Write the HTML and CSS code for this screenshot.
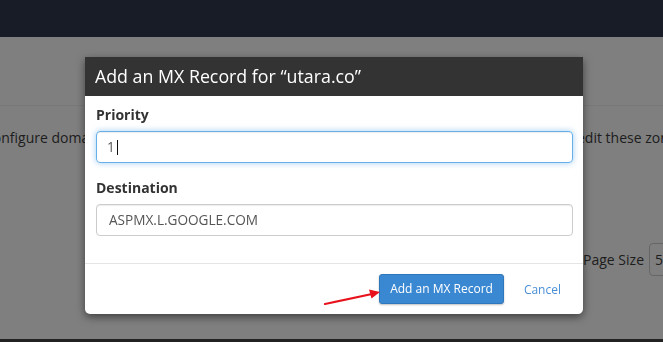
FILE: index.html
```html
<!DOCTYPE html>
<html lang="en">
<head>
  <meta charset="UTF-8" />
  <title>Zone Editor - Add MX Record</title>
  <link rel="stylesheet" href="styles.css">
</head>
<body>

  <div class="topbar"></div>

  <div class="page">
    <div class="page-head"></div>

    <div class="intro">
      <span class="intro-left">Configure domains and their DNS records here. You can</span>
      <span class="intro-right">edit these zones at any time.</span>
    </div>

    <div class="pager">
      <span>Page Size</span>
      <span class="page-select">5</span>
    </div>

    <div class="table-top"></div>
  </div>

  <div class="backdrop"></div>

  <div class="modal">
    <div class="modal-header">Add an MX Record for “utara.co”</div>

    <div class="modal-body">
      <div class="form-group">
        <label>Priority</label>
        <div class="field focus">1<span class="caret"></span></div>
      </div>
      <div class="form-group">
        <label>Destination</label>
        <div class="field">ASPMX.L.GOOGLE.COM</div>
      </div>
    </div>

    <div class="modal-footer">
      <button type="button" class="btn-primary">Add an MX Record</button>
      <a href="#" class="btn-link">Cancel</a>
    </div>
  </div>

  <!-- annotation arrow -->
  <svg class="arrow" width="70" height="24" viewBox="0 0 70 24">
    <line x1="5" y1="19" x2="52" y2="9" stroke="#e8121c" stroke-width="2.2" stroke-linecap="round"/>
    <polygon points="60,7 49,4.5 51.5,13.5" fill="#e8121c"/>
  </svg>

</body>
</html>
```

FILE: styles.css
```css
* {
  box-sizing: border-box;
}

body {
  margin: 0;
  font-family: 'Open Sans', sans-serif;
  font-size: 14px;
  color: #3c3c3c;
  background: #fff;
  height: 342px;
  overflow: hidden;
}

.topbar {
  height: 37px;
  background: #2e384c;
}

.page-head {
  height: 69px;
  border-bottom: 1px solid #f0f0f0;
}

.intro {
  display: flex;
  white-space: nowrap;
  margin-top: 22px;
  line-height: 20px;
}

.intro-left {
  width: 593px;
  flex-shrink: 0;
  margin-left: -16px;
  overflow: hidden;
}

.pager {
  display: flex;
  align-items: center;
  justify-content: flex-end;
  gap: 5px;
  margin-top: 95px;
  margin-right: -30px;
}

.page-select {
  width: 44px;
  height: 33px;
  border: 1px solid #ccc;
  border-radius: 4px;
  padding: 6px 5px;
}

.table-top {
  margin-top: 63px;
  height: 3px;
  background: #444;
}

.backdrop {
  position: fixed;
  inset: 0;
  background: rgba(0, 0, 0, 0.5);
}

.modal {
  position: absolute;
  top: 57px;
  left: 85px;
  width: 498px;
  background: #fff;
  border-radius: 0 0 5px 5px;
  box-shadow: 0 3px 9px rgba(0, 0, 0, 0.5);
}

.modal-header {
  height: 39px;
  background: #333;
  color: #fff;
  font-size: 17.8px;
  line-height: 39px;
  padding: 0 10px;
}

.modal-body {
  padding: 9px 10px 12px 11px;
}

.form-group {
  margin-bottom: 15px;
}

.form-group label {
  display: block;
  font-weight: bold;
  color: #333;
  line-height: 20px;
  margin-bottom: 6px;
}

.field {
  height: 32px;
  border: 1px solid #ccc;
  border-radius: 4px;
  padding: 5px 12px;
  font-size: 13.6px;
  line-height: 20px;
  color: #555;
  box-shadow: inset 0 1px 1px rgba(0, 0, 0, 0.075);
}

.field.focus {
  padding-left: 10px;
  border-color: #66afe9;
  box-shadow: inset 0 1px 1px rgba(0, 0, 0, 0.075), 0 0 6px rgba(102, 175, 233, 0.6);
}

.caret {
  display: inline-block;
  width: 1px;
  height: 15px;
  margin-left: 2px;
  vertical-align: -3px;
  background: #111;
}

.modal-footer {
  display: flex;
  justify-content: flex-end;
  align-items: center;
  gap: 8px;
  padding: 10px;
  border-top: 1px solid #e5e5e5;
}

.btn-primary {
  font-family: 'Open Sans', sans-serif;
  font-size: 12px;
  line-height: 20px;
  color: #fff;
  background: #3a88d2;
  border: 1px solid #2f77bd;
  border-radius: 3px;
  padding: 4px 10px;
  box-shadow: 0 1px 2px rgba(0, 0, 0, 0.25);
  cursor: pointer;
}

.btn-link {
  font-size: 12px;
  color: #4a8fd6;
  text-decoration: none;
  padding: 0 12px;
}

.arrow {
  position: absolute;
  left: 320px;
  top: 285px;
}
```
